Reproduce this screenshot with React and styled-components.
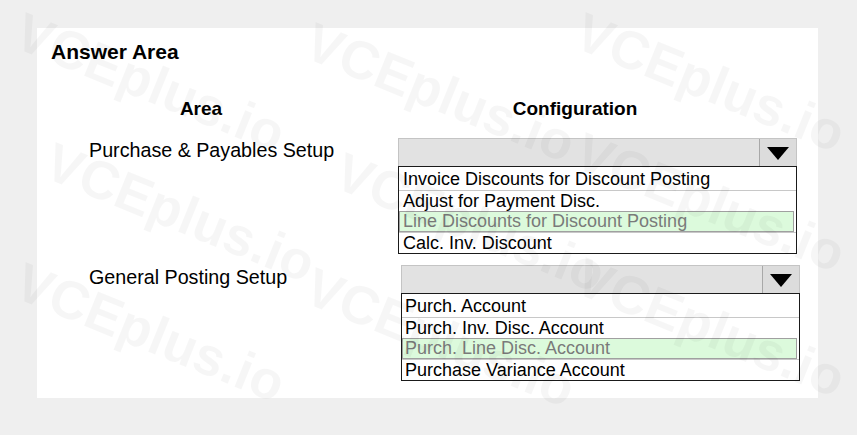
import React from "react";
import styled, { createGlobalStyle } from "styled-components";

const GlobalStyle = createGlobalStyle`
  html, body {
    margin: 0;
    padding: 0;
    background: #efefef;
    font-family: "Liberation Sans", Arial, sans-serif;
    color: #000;
  }
`;

const Page = styled.div`
  position: relative;
  width: 857px;
  height: 435px;
  padding: 28px 0 0 37px;
  box-sizing: border-box;
  overflow: hidden;
`;

const Panel = styled.div`
  width: 781px;
  height: 370px;
  background: #fff;
  box-sizing: border-box;
  padding: 12px 0 0 14px;
  display: flex;
  flex-direction: column;
`;

const Title = styled.h2`
  margin: 0;
  font-size: 21px;
  line-height: 24px;
  font-weight: bold;
`;

const HeaderRow = styled.div`
  display: flex;
  margin-top: 34px;
`;

const HeaderCell = styled.div`
  width: ${(p) => p.$width}px;
  text-align: center;
  font-size: 19px;
  line-height: 22px;
  font-weight: bold;
`;

const SetupRow = styled.div`
  display: flex;
  align-items: flex-start;
  margin-top: ${(p) => p.$gap}px;
`;

const Label = styled.div`
  width: ${(p) => 347 + p.$shift - 38}px;
  padding: 1px 0 0 38px;
  font-size: 19.7px;
  line-height: 22px;
  flex-shrink: 0;
`;

const Dropdown = styled.div`
  width: 399px;
  display: flex;
  flex-direction: column;
`;

const Select = styled.div`
  height: 28px;
  display: flex;
  background: #e2e2e2;
  border: 1px solid #c4c4c4;
  border-bottom: none;
  box-sizing: border-box;
`;

const SelectValue = styled.div`
  flex: 1;
`;

const ArrowButton = styled.div`
  width: 36px;
  border-left: 1px solid #a8a8a8;
  display: flex;
  align-items: center;
  justify-content: center;
  background: #dcdcdc;
`;

const Arrow = styled.div`
  width: 0;
  height: 0;
  border-left: 11px solid transparent;
  border-right: 11px solid transparent;
  border-top: 13px solid #000;
  margin-top: 2px;
`;

const List = styled.div`
  border: 1px solid #1a1a1a;
  padding-top: 2px;
  display: flex;
  flex-direction: column;
`;

const Option = styled.div`
  height: 21px;
  box-sizing: border-box;
  padding-left: ${(p) => p.$indent}px;
  font-size: 18px;
  line-height: 20px;
  white-space: nowrap;
  border-top: ${(p) => (p.$first ? "none" : "1px solid #c8c8c8")};
  ${(p) =>
    p.$selected &&
    `
    background: #dcfadc;
    color: #7a7a7a;
    border: 1px solid #a0a0a0;
    margin-right: 2px;
    padding-left: ${p.$indent - 1}px;
    line-height: 19px;
  `}
`;

const Watermarks = styled.div`
  position: absolute;
  inset: 0;
  pointer-events: none;
`;

const Mark = styled.span`
  position: absolute;
  font-family: "Liberation Sans", Arial, sans-serif;
  font-weight: bold;
  font-size: 54px;
  color: rgba(0, 0, 0, 0.035);
  transform: rotate(22deg);
  transform-origin: left top;
  white-space: nowrap;
`;

const marks = [
  [30, 0], [320, 10], [590, 0],
  [60, 130], [350, 140], [590, 120],
  [30, 250], [320, 255], [590, 245],
];

function SetupDropdown({ options, selected, indent }) {
  return (
    <Dropdown>
      <Select>
        <SelectValue />
        <ArrowButton>
          <Arrow />
        </ArrowButton>
      </Select>
      <List>
        {options.map((o, i) => (
          <Option key={o} $first={i === 0} $selected={i === selected} $indent={indent}>
            {o}
          </Option>
        ))}
      </List>
    </Dropdown>
  );
}

export default function App() {
  return (
    <>
      <GlobalStyle />
      <Page>
        <Panel>
          <Title>Answer Area</Title>
          <HeaderRow>
            <HeaderCell $width={300}>Area</HeaderCell>
            <HeaderCell $width={448}>Configuration</HeaderCell>
          </HeaderRow>
          <SetupRow $gap={18}>
            <Label $shift={0}>Purchase &amp; Payables Setup</Label>
            <SetupDropdown
              indent={4}
              selected={2}
              options={[
                "Invoice Discounts for Discount Posting",
                "Adjust for Payment Disc.",
                "Line Discounts for Discount Posting",
                "Calc. Inv. Discount",
              ]}
            />
          </SetupRow>
          <SetupRow $gap={11}>
            <Label $shift={3}>General Posting Setup</Label>
            <SetupDropdown
              indent={3}
              selected={2}
              options={[
                "Purch. Account",
                "Purch. Inv. Disc. Account",
                "Purch. Line Disc. Account",
                "Purchase Variance Account",
              ]}
            />
          </SetupRow>
        </Panel>
        <Watermarks>
          {marks.map(([x, y]) => (
            <Mark key={`${x}-${y}`} style={{ left: x, top: y }}>
              VCEplus.io
            </Mark>
          ))}
        </Watermarks>
      </Page>
    </>
  );
}
